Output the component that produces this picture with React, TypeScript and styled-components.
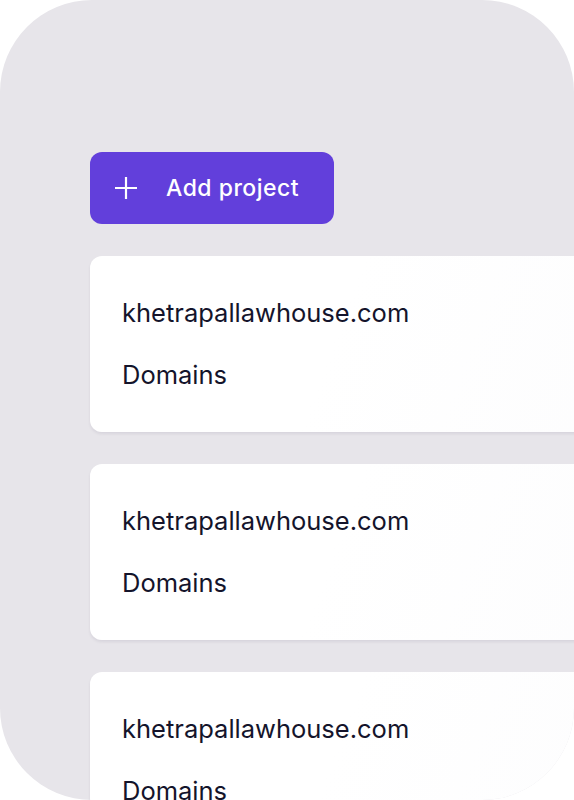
import styled, { createGlobalStyle } from "styled-components";

const GlobalStyle = createGlobalStyle`
  html, body {
    margin: 0;
    padding: 0;
    background: #ffffff;
  }

  body {
    font-family: Inter, "Noto Sans", sans-serif;
    color: #14142b;
  }
`;

const Panel = styled.main`
  box-sizing: border-box;
  display: flex;
  flex-direction: column;
  align-items: flex-start;
  gap: 32px;
  width: 574px;
  height: 800px;
  padding: 152px 0 0 90px;
  overflow: hidden;

  background-color: #e7e5ea;
  border-radius: 92px;
`;

const AddButton = styled.button`
  flex-shrink: 0;
  display: flex;
  align-items: center;
  gap: 28px;
  height: 72px;
  width: 244px;
  padding: 0 0 0 24px;

  font-family: inherit;
  font-size: 23px;
  font-weight: 500;
  letter-spacing: 0.5px;
  color: #ffffff;

  background-color: #623fdb;
  border: none;
  border-radius: 12px;
  cursor: pointer;
`;

const Card = styled.article`
  box-sizing: border-box;
  flex-shrink: 0;
  display: flex;
  flex-direction: column;
  gap: 28px;
  width: 620px;
  height: 176px;
  padding: 40px 32px;

  background: linear-gradient(110deg, #ffffff 40%, #fcfcfd 100%);
  border-radius: 12px;
  box-shadow: 0 2px 3px rgba(40, 30, 60, 0.08);
`;

const Domain = styled.h3`
  margin: 0;
  font-size: 25.5px;
  font-weight: 400;
  line-height: 34px;
  color: #14142b;
`;

const Label = styled.p`
  margin: 0;
  font-size: 25.5px;
  font-weight: 400;
  line-height: 34px;
  color: #14142b;
`;

const PlusIcon = () => (
  <svg width="24" height="24" viewBox="0 0 24 24" fill="none">
    <path d="M12 1v22M1 12h22" stroke="#ffffff" strokeWidth="2.2" />
  </svg>
);

const projects = [
  { domain: "khetrapallawhouse.com", label: "Domains" },
  { domain: "khetrapallawhouse.com", label: "Domains" },
  { domain: "khetrapallawhouse.com", label: "Domains" },
];

export default function App() {
  return (
    <>
      <GlobalStyle />
      <Panel>
        <AddButton>
          <PlusIcon />
          Add project
        </AddButton>
        {projects.map((p, i) => (
          <Card key={i}>
            <Domain>{p.domain}</Domain>
            <Label>{p.label}</Label>
          </Card>
        ))}
      </Panel>
    </>
  );
}
